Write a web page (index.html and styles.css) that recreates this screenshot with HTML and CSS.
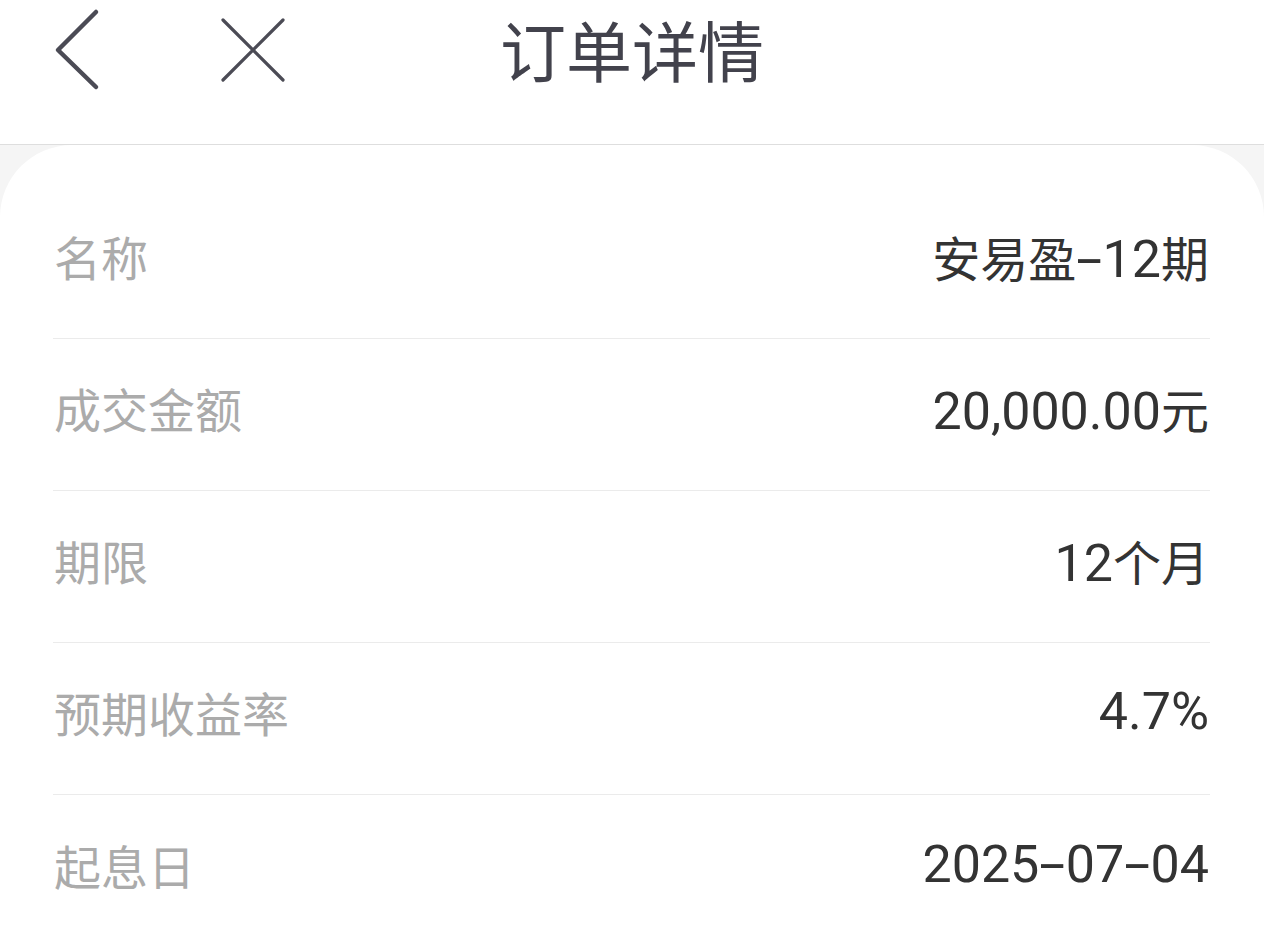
FILE: index.html
```html
<!doctype html>
<html>
  <head>
    <title>订单详情</title>
    <meta name="viewport" content="width=device-width, user-scalable=no">
    <link rel="stylesheet" href="styles.css">
  </head>
  <body>
    <header class="topbar">
      <div class="nav-left">
        <button type="button" class="icon-btn back-btn" title="返回">
          <svg width="50" height="100" viewBox="0 0 50 100">
            <polyline points="44,12 6,50 44,87" fill="none" stroke="#4b4b55" stroke-width="4.5" stroke-linecap="round" stroke-linejoin="round"/>
          </svg>
        </button>
        <button type="button" class="icon-btn close-btn" title="关闭">
          <svg width="70" height="100" viewBox="0 0 70 100">
            <path d="M5 20 L65 80 M65 20 L5 80" fill="none" stroke="#4b4b55" stroke-width="3.2" stroke-linecap="round"/>
          </svg>
        </button>
      </div>
      <h1 class="title">订单详情</h1>
      <div class="nav-right"></div>
    </header>
    <main class="detail-card">
      <div class="detail-row">
        <span class="label">名称</span>
        <span class="value"><span class="cjk">安易盈</span><span class="dash">-</span>12<span class="cjk">期</span></span>
      </div>
      <div class="detail-row">
        <span class="label">成交金额</span>
        <span class="value">20,000.00<span class="cjk">元</span></span>
      </div>
      <div class="detail-row">
        <span class="label">期限</span>
        <span class="value">12<span class="cjk">个月</span></span>
      </div>
      <div class="detail-row">
        <span class="label">预期收益率</span>
        <span class="value">4.7%</span>
      </div>
      <div class="detail-row">
        <span class="label">起息日</span>
        <span class="value">2025<span class="dash">-</span>07<span class="dash">-</span>04</span>
      </div>
    </main>
  </body>
</html>
```

FILE: styles.css
```css
body {
  margin: 0;
  background-color: #f5f5f5;
  font-family: Roboto, "Noto Sans CJK SC", sans-serif;
  overflow: hidden;
}
.topbar {
  display: grid;
  grid-template-columns: 1fr auto 1fr;
  align-items: start;
  height: 144px;
  background-color: #fff;
  border-bottom: 1px solid #dedede;
}
.nav-left {
  display: flex;
  align-items: center;
  height: 100px;
  padding-left: 52px;
}
.icon-btn {
  background-color: transparent;
  border: none;
  padding: 0;
  display: block;
}
.icon-btn svg {
  display: block;
}
.close-btn {
  margin-left: 116px;
}
.title {
  margin: 0;
  height: 100px;
  line-height: 96px;
  font-size: 66px;
  font-weight: normal;
  color: #42424c;
  font-family: "Noto Sans CJK SC", sans-serif;
}
.detail-card {
  background-color: #fff;
  border-radius: 72px 72px 0 0;
  padding: 42px 54px 0 53px;
  min-height: 800px;
}
.detail-row {
  display: flex;
  justify-content: space-between;
  align-items: center;
  height: 152px;
  box-sizing: border-box;
  padding-bottom: 14px;
  border-bottom: 1px solid #ebebeb;
}
.detail-row:last-child {
  border-bottom: none;
}
.label {
  font-size: 47px;
  color: #ababab;
  padding-left: 1px;
  font-family: "Noto Sans CJK SC", sans-serif;
}
.value {
  font-size: 52px;
  color: #333;
  padding-right: 1px;
}
.value .cjk {
  font-size: 48px;
  font-family: "Noto Sans CJK SC", sans-serif;
}
.value .dash {
  display: inline-block;
  margin: 0 6px;
  transform: scaleX(1.8);
}
```
